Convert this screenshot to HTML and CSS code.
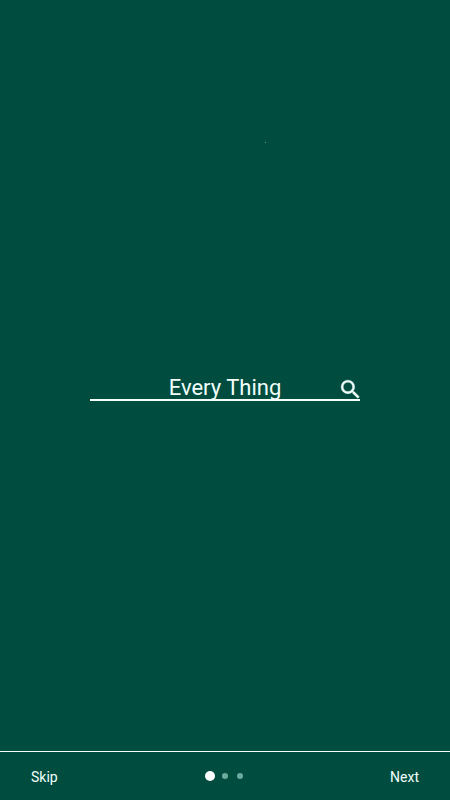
FILE: index.html
```html
<!DOCTYPE html>
<html lang="en">
<head>
    <meta charset="UTF-8">
    <meta name="viewport" content="width=device-width, initial-scale=1.0">
    <title>Every Thing</title>
    <link rel="stylesheet" href="styles.css">
</head>
<body>
    <div class="screen">
        <span class="speck"></span>
        <main class="slide">
            <div class="search-line">
                <span class="search-text">Every Thing</span>
                <svg class="search-icon" viewBox="0 0 24 24" width="25" height="25" aria-hidden="true">
                    <path d="M15.5 14h-.79l-.28-.27A6.47 6.47 0 0 0 16 9.5 6.5 6.5 0 1 0 9.5 16c1.61 0 3.09-.59 4.23-1.57l.27.28v.79l5 4.99L20.49 19l-4.99-5zm-6 0C7.01 14 5 11.99 5 9.5S7.01 5 9.5 5 14 7.01 14 9.5 11.99 14 9.5 14z"/>
                </svg>
            </div>
        </main>
        <footer class="bottom-bar">
            <button class="bar-btn bar-btn-left">Skip</button>
            <div class="dots">
                <span class="dot dot-active"></span>
                <span class="dot"></span>
                <span class="dot"></span>
            </div>
            <button class="bar-btn bar-btn-right">Next</button>
        </footer>
    </div>
</body>
</html>
```
FILE: styles.css
```css
:root {
    --green: #004d40;
    --light: #f2fffb;
}

* {
    margin: 0;
    padding: 0;
    box-sizing: border-box;
}

body {
    font-family: Roboto, 'Noto Sans', sans-serif;
    background-color: var(--green);
    color: var(--light);
}

.screen {
    position: relative;
    width: 450px;
    height: 800px;
    display: flex;
    flex-direction: column;
    overflow: hidden;
}

.speck {
    position: absolute;
    left: 265px;
    top: 142px;
    width: 1px;
    height: 1px;
    background-color: #5fa796;
}

.slide {
    flex: 1;
    padding-top: 373px;
}

.search-line {
    position: relative;
    width: 270px;
    height: 28px;
    margin-left: 90px;
    border-bottom: 2px solid var(--light);
    text-align: center;
}

.search-text {
    font-size: 22px;
    line-height: 30px;
    display: block;
}

.search-icon {
    position: absolute;
    right: -3px;
    top: 4px;
    fill: var(--light);
    stroke: var(--light);
    stroke-width: 0.4;
}

.bottom-bar {
    height: 49px;
    border-top: 1px solid var(--light);
    display: grid;
    grid-template-columns: 1fr auto 1fr;
    align-items: center;
    padding: 0 31px;
}

.bar-btn {
    background: none;
    border: none;
    color: var(--light);
    font-family: inherit;
    font-size: 14px;
    margin-top: 2px;
}

.bar-btn-left {
    justify-self: start;
}

.bar-btn-right {
    justify-self: end;
}

.dots {
    display: grid;
    grid-template-columns: repeat(3, 15px);
    justify-items: center;
    align-items: center;
}

.dot {
    width: 6px;
    height: 6px;
    border-radius: 50%;
    background-color: #6bab9c;
}

.dot-active {
    width: 10px;
    height: 10px;
    background-color: #ffffff;
}
```
